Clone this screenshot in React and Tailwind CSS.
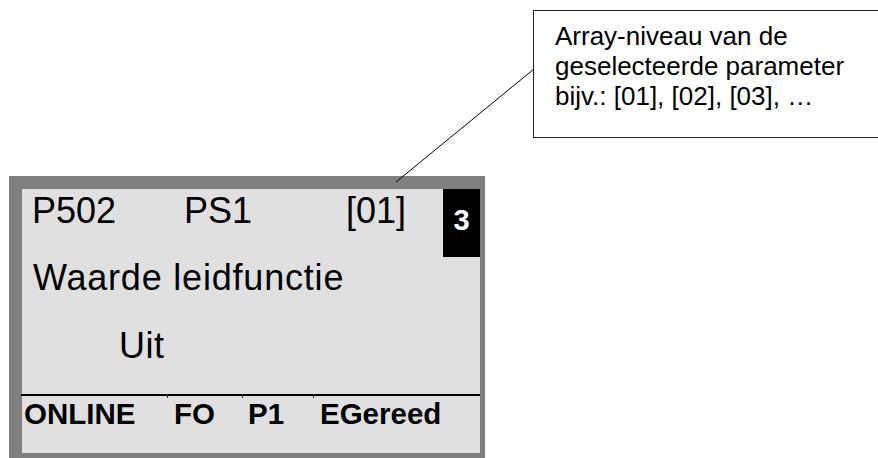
import React from "react";

export default function App() {
  return (
    <div
      className="relative w-[878px] h-[458px] overflow-hidden bg-white text-black"
      style={{ fontFamily: '"Liberation Sans", Arial, sans-serif' }}
    >
      {/* Callout box */}
      <div className="ml-[533px] mt-[10px] w-[360px] h-[128px] border border-[#222] bg-white pl-[21px] pt-[10px] text-[26px] leading-[30px]">
        <div>Array-niveau van de</div>
        <div>geselecteerde parameter</div>
        <div>bijv.: [01], [02], [03], …</div>
      </div>

      {/* Display */}
      <div className="ml-[9px] mt-[38px] w-[476px] h-[282px] bg-[#808080] pl-[13px] pt-[13px] pr-[5px] pb-[5px]">
        <div className="w-[458px] h-[264px] bg-[#e0e0e0] flex flex-col">
          <div className="flex h-[68px] shrink-0">
            <div className="pl-[10px] w-[162px] pt-[3.5px] text-[36px] leading-[36px]">P502</div>
            <div className="w-[162px] pt-[3.5px] text-[36px] leading-[36px]">PS1</div>
            <div className="w-[97px] pt-[3.5px] text-[36px] leading-[36px]">[01]</div>
            <div className="w-[37px] h-[68px] bg-black text-white font-bold text-[29px] leading-[29px] pt-[17px] text-center">
              3
            </div>
          </div>
          <div className="mt-[2.5px] h-[36px] pl-[11px] text-[36px] leading-[36px] tracking-[0.8px]">
            Waarde leidfunctie
          </div>
          <div className="mt-[32px] h-[36px] pl-[97px] text-[36px] leading-[36px] tracking-[0.5px]">Uit</div>
          <div className="relative mt-[30px] -ml-[1px] w-[459px] h-[2px] bg-black">
            <div className="absolute left-[146px] top-0 w-[1px] h-[4px] bg-[#333]" />
            <div className="absolute left-[221px] top-0 w-[1px] h-[4px] bg-[#333]" />
            <div className="absolute left-[292px] top-0 w-[1px] h-[4px] bg-[#333]" />
          </div>
          <div className="mt-[3px] flex h-[30px] font-bold text-[29.5px] leading-[30px]">
            <div className="pl-[2px] w-[152px]">ONLINE</div>
            <div className="w-[74px]">FO</div>
            <div className="w-[72px]">P1</div>
            <div>EGereed</div>
          </div>
        </div>
      </div>

      {/* Connector line */}
      <svg
        className="absolute left-0 top-0 pointer-events-none"
        width="878"
        height="458"
        viewBox="0 0 878 458"
      >
        <line x1="534" y1="69" x2="396" y2="182" stroke="#000" strokeWidth="1" />
      </svg>
    </div>
  );
}
